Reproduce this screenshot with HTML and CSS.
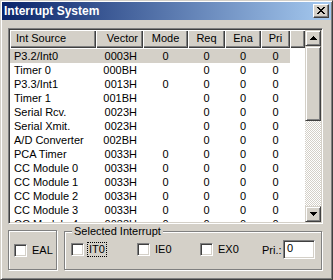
FILE: index.html
```html
<!DOCTYPE html>
<html lang="en">
<head>
    <meta charset="UTF-8">
    <title>Interrupt System</title>
    <link rel="stylesheet" href="styles.css">
</head>
<body>
    <div class="window">
        <div class="titlebar">
            <span class="title">Interrupt System</span>
            <span class="close-btn">
                <svg width="8" height="7" viewBox="0 0 8 7"><path d="M0 0h2v1h-2zM6 0h2v1h-2zM1 1h2v1h-2zM5 1h2v1h-2zM2 2h4v1h-4zM3 3h2v1h-2zM2 4h4v1h-4zM1 5h2v1h-2zM5 5h2v1h-2zM0 6h2v1h-2zM6 6h2v1h-2z" fill="#000"/></svg>
            </span>
        </div>
        <div class="content">
            <div class="listbox">
                <div class="list-main">
                    <div class="list-header">
                        <span class="hcell c-src">Int Source</span>
                        <span class="hcell c-vec">Vector</span>
                        <span class="hcell c-mode">Mode</span>
                        <span class="hcell c-req">Req</span>
                        <span class="hcell c-ena">Ena</span>
                        <span class="hcell c-pri">Pri</span>
                        <span class="hcell c-fill"></span>
                    </div>
                    <div class="list-rows">
                        <div class="row selected"><span class="c-src">P3.2/Int0</span><span class="c-vec">0003H</span><span class="c-mode">0</span><span class="c-req">0</span><span class="c-ena">0</span><span class="c-pri">0</span></div>
                        <div class="row"><span class="c-src">Timer 0</span><span class="c-vec">000BH</span><span class="c-mode"></span><span class="c-req">0</span><span class="c-ena">0</span><span class="c-pri">0</span></div>
                        <div class="row"><span class="c-src">P3.3/Int1</span><span class="c-vec">0013H</span><span class="c-mode">0</span><span class="c-req">0</span><span class="c-ena">0</span><span class="c-pri">0</span></div>
                        <div class="row"><span class="c-src">Timer 1</span><span class="c-vec">001BH</span><span class="c-mode"></span><span class="c-req">0</span><span class="c-ena">0</span><span class="c-pri">0</span></div>
                        <div class="row"><span class="c-src">Serial Rcv.</span><span class="c-vec">0023H</span><span class="c-mode"></span><span class="c-req">0</span><span class="c-ena">0</span><span class="c-pri">0</span></div>
                        <div class="row"><span class="c-src">Serial Xmit.</span><span class="c-vec">0023H</span><span class="c-mode"></span><span class="c-req">0</span><span class="c-ena">0</span><span class="c-pri">0</span></div>
                        <div class="row"><span class="c-src">A/D Converter</span><span class="c-vec">002BH</span><span class="c-mode"></span><span class="c-req">0</span><span class="c-ena">0</span><span class="c-pri">0</span></div>
                        <div class="row"><span class="c-src">PCA Timer</span><span class="c-vec">0033H</span><span class="c-mode">0</span><span class="c-req">0</span><span class="c-ena">0</span><span class="c-pri">0</span></div>
                        <div class="row"><span class="c-src">CC Module 0</span><span class="c-vec">0033H</span><span class="c-mode">0</span><span class="c-req">0</span><span class="c-ena">0</span><span class="c-pri">0</span></div>
                        <div class="row"><span class="c-src">CC Module 1</span><span class="c-vec">0033H</span><span class="c-mode">0</span><span class="c-req">0</span><span class="c-ena">0</span><span class="c-pri">0</span></div>
                        <div class="row"><span class="c-src">CC Module 2</span><span class="c-vec">0033H</span><span class="c-mode">0</span><span class="c-req">0</span><span class="c-ena">0</span><span class="c-pri">0</span></div>
                        <div class="row"><span class="c-src">CC Module 3</span><span class="c-vec">0033H</span><span class="c-mode">0</span><span class="c-req">0</span><span class="c-ena">0</span><span class="c-pri">0</span></div>
                        <div class="row"><span class="c-src">CC Module 4</span><span class="c-vec">0033H</span><span class="c-mode">0</span><span class="c-req">0</span><span class="c-ena">0</span><span class="c-pri">0</span></div>
                    </div>
                </div>
                <div class="scrollbar">
                    <span class="sb-btn">
                        <svg width="7" height="4" viewBox="0 0 7 4"><path d="M3 0h1v1h-1zM2 1h3v1h-3zM1 2h5v1h-5zM0 3h7v1h-7z" fill="#000"/></svg>
                    </span>
                    <span class="sb-thumb"></span>
                    <span class="sb-track"></span>
                    <span class="sb-btn">
                        <svg width="7" height="4" viewBox="0 0 7 4"><path d="M0 0h7v1h-7zM1 1h5v1h-5zM2 2h3v1h-3zM3 3h1v1h-1z" fill="#000"/></svg>
                    </span>
                </div>
            </div>

            <div class="bottom">
                <div class="eal-box">
                    <label class="check"><span class="cb"></span><span class="check-text">EAL</span></label>
                </div>
                <fieldset class="group">
                    <legend>Selected Interrupt</legend>
                    <div class="group-items">
                        <label class="check item-it0"><span class="cb"></span><span class="check-text focus">IT0</span></label>
                        <label class="check item-ie0"><span class="cb"></span><span class="check-text">IE0</span></label>
                        <label class="check item-ex0"><span class="cb"></span><span class="check-text">EX0</span></label>
                        <span class="pri-label">Pri.:</span>
                        <span class="pri-input">0</span>
                    </div>
                </fieldset>
            </div>
        </div>
    </div>
</body>
</html>
```

FILE: styles.css
```css
*{
    margin: 0;
    padding: 0;
    box-sizing: border-box;
}
body{
    font-family: "Liberation Sans", Arial, sans-serif;
    font-size: 11px;
    color: #000;
    background: #d4d0c8;
}
.window{
    width: 333px;
    height: 280px;
    background: #d4d0c8;
    border-top: 1px solid #d4d0c8;
    border-left: 1px solid #d4d0c8;
    border-right: 1px solid #404040;
    border-bottom: 1px solid #404040;
    box-shadow: inset 1px 1px #fff, inset -1px -1px #808080;
    padding: 1px 1px 1px 1px;
    display: flex;
    flex-direction: column;
}
.titlebar{
    height: 18px;
    background: linear-gradient(to right, #0a246a, #a6caf0);
    display: flex;
    align-items: center;
    justify-content: space-between;
    padding: 0 2px 0 2px;
}
.title{
    color: #fff;
    font-weight: bold;
    font-size: 12px;
}
.close-btn{
    width: 16px;
    height: 14px;
    background: #d4d0c8;
    border-top: 1px solid #fff;
    border-left: 1px solid #fff;
    border-right: 1px solid #404040;
    border-bottom: 1px solid #404040;
    box-shadow: inset -1px -1px #808080;
    display: flex;
    align-items: center;
    justify-content: center;
    padding: 0 1px 1px 0;
}
.close-btn svg{
    display: block;
}
.content{
    flex: 1;
    padding: 8px 6px 0 6px;
}

/* list view */
.listbox{
    width: 315px;
    height: 196px;
    display: flex;
    background: #fff;
    border-top: 1px solid #808080;
    border-left: 1px solid #808080;
    border-right: 1px solid #fff;
    border-bottom: 1px solid #fff;
    box-shadow: inset 1px 1px #404040, inset -1px -1px #d4d0c8;
    padding: 1px;
}
.list-main{
    width: 295px;
    overflow: hidden;
}
.list-header{
    display: flex;
    height: 18px;
}
.hcell{
    display: block;
    height: 18px;
    line-height: 17px;
    background: #d4d0c8;
    box-shadow: inset 1px 1px #fff, inset -1px -1px #404040, inset -2px -2px #808080;
}
.list-rows{
    padding-top: 1px;
}
.row{
    display: flex;
    width: 280px;
    height: 14px;
    line-height: 14px;
    white-space: nowrap;
}
.row.selected{
    background: #d4d0c8;
}
.c-src{ width: 86px; padding-left: 4px; }
.hcell.c-src{ padding-left: 6px; }
.c-vec{ width: 47px; text-align: right; padding-right: 6px; }
.hcell.c-vec{ padding-right: 5px; }
.c-mode{ width: 45px; text-align: center; }
.c-req{ width: 37px; text-align: center; }
.c-ena{ width: 36px; text-align: center; }
.c-pri{ width: 29px; text-align: center; }
.c-fill{ width: 15px; }

/* scrollbar */
.scrollbar{
    width: 16px;
    display: flex;
    flex-direction: column;
}
.sb-btn, .sb-thumb{
    display: flex;
    align-items: center;
    justify-content: center;
    width: 16px;
    height: 16px;
    background: #d4d0c8;
    border-top: 1px solid #d4d0c8;
    border-left: 1px solid #d4d0c8;
    border-right: 1px solid #404040;
    border-bottom: 1px solid #404040;
    box-shadow: inset 1px 1px #fff, inset -1px -1px #808080;
}
.sb-btn svg{
    display: block;
}
.sb-thumb{
    height: 75px;
}
.sb-track{
    flex: 1;
    background: repeating-conic-gradient(#fff 0 25%, #d4d0c8 0 50%) 0 0 / 2px 2px;
}

/* bottom controls */
.bottom{
    display: flex;
    align-items: flex-end;
    margin-top: 1px;
}
.eal-box{
    width: 49px;
    height: 40px;
    border: 1px solid #808080;
    box-shadow: inset 1px 1px #fff, 1px 1px #fff;
    display: flex;
    align-items: center;
    padding: 1px 0 0 5px;
}
.group{
    width: 258px;
    height: 45px;
    margin-left: 7px;
    border: 1px solid #808080;
    box-shadow: inset 1px 1px #fff, 1px 1px #fff;
    padding: 0 0 0 6px;
    min-inline-size: 0;
}
.group legend{
    margin-left: 1px;
    padding: 0 2px;
    line-height: 13px;
    background: #d4d0c8;
}
.group-items{
    display: flex;
    align-items: center;
    height: 19px;
    margin-top: 2px;
}
.check{
    display: flex;
    align-items: center;
}
.cb{
    display: block;
    width: 13px;
    height: 13px;
    background: #fff;
    border-top: 1px solid #808080;
    border-left: 1px solid #808080;
    border-right: 1px solid #fff;
    border-bottom: 1px solid #fff;
    box-shadow: inset 1px 1px #404040, inset -1px -1px #d4d0c8;
}
.check-text{
    margin-left: 5px;
    line-height: 13px;
}
.check-text.focus{
    margin-left: 3px;
    padding: 0 1px;
    border: 1px dotted #000;
}
.item-it0{ width: 66px; }
.item-ie0{ width: 63px; }
.item-ex0{ width: 62px; }
.pri-label{
    width: 21px;
}
.pri-input{
    width: 32px;
    height: 19px;
    line-height: 15px;
    padding-left: 3px;
    background: #fff;
    border-top: 1px solid #808080;
    border-left: 1px solid #808080;
    border-right: 1px solid #fff;
    border-bottom: 1px solid #fff;
    box-shadow: inset 1px 1px #404040, inset -1px -1px #d4d0c8;
}
```
